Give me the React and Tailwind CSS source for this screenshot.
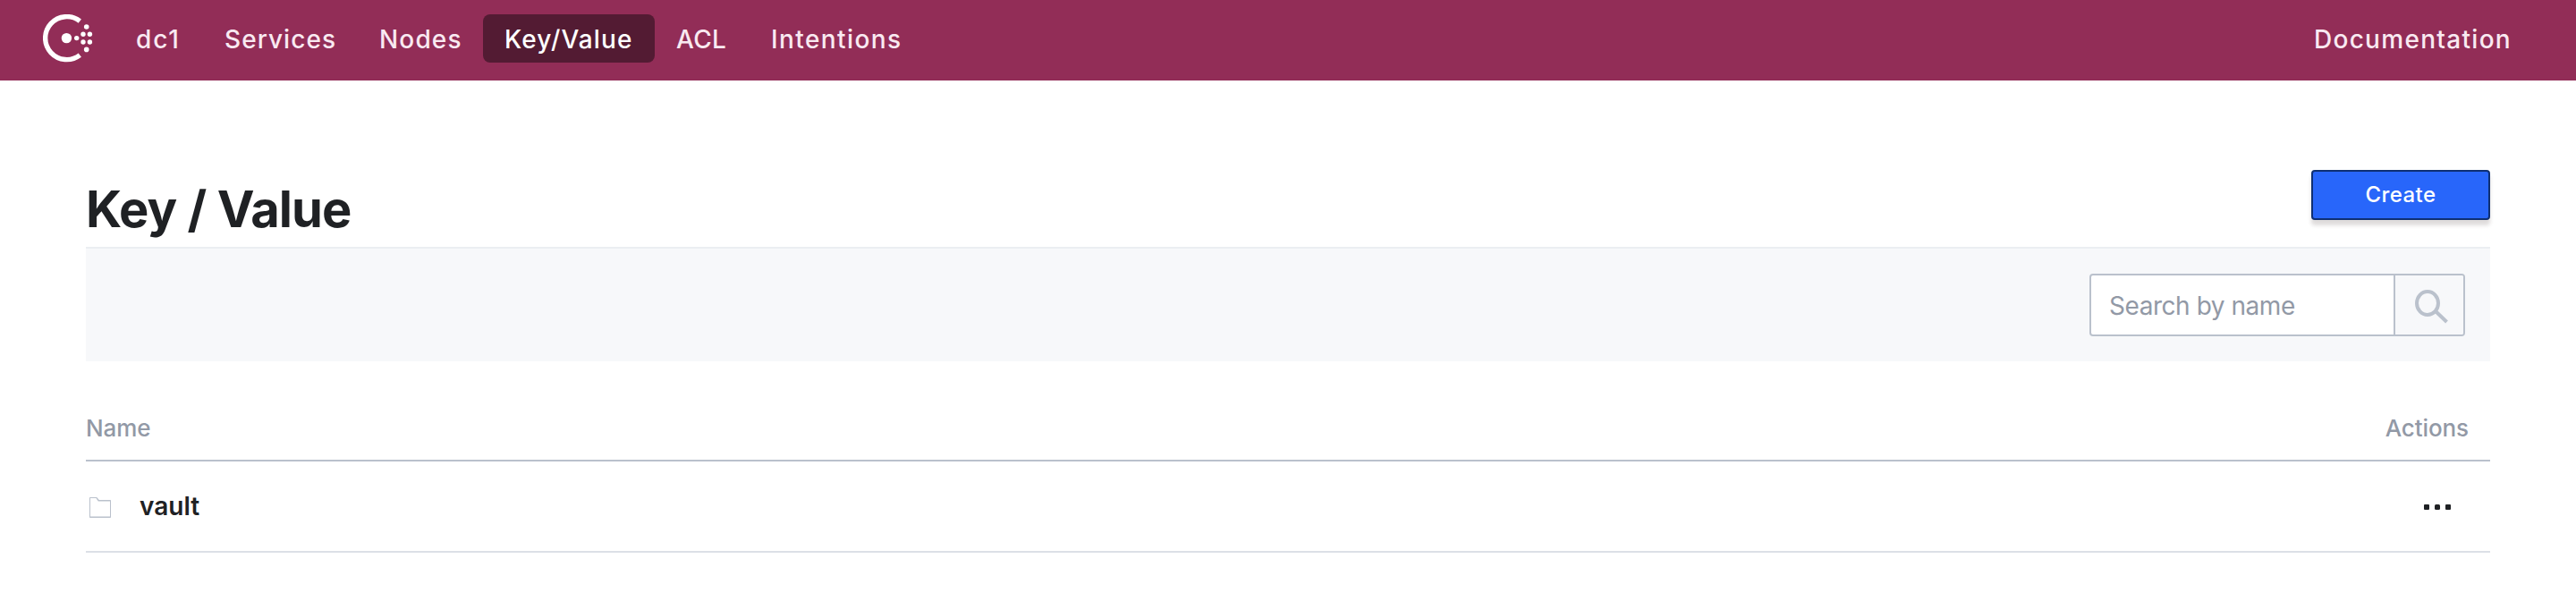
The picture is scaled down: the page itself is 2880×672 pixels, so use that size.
const navItem =
  "flex h-[54px] shrink-0 items-center rounded-lg px-6 pt-0.5 whitespace-nowrap";

const links = [
  { label: "dc1", look: "w-[99px] tracking-[1.9px] text-[#f9e9f1]" },
  { label: "Services", look: "w-[173px] tracking-[1.05px] text-[#f9e9f1]" },
  { label: "Nodes", look: "w-[140px] tracking-[1.15px] text-[#f9e9f1]" },
  { label: "Key/Value", look: "w-[192px] bg-[#531b33] tracking-[1.1px] text-white" },
  { label: "ACL", look: "w-[106px] tracking-[0.3px] text-[#f9e9f1]" },
  { label: "Intentions", look: "tracking-[1.4px] text-[#f9e9f1]" },
];

function ConsulLogo() {
  return (
    <svg width="56" height="54" viewBox="0 0 56 54" fill="#fff" aria-hidden="true">
      <path
        d="M41.3 7.6 A24 24 0 1 0 41.3 45.6"
        fill="none"
        stroke="#fff"
        strokeWidth="5.4"
      />
      <circle cx="26.4" cy="26.6" r="5.7" />
      <circle cx="37.7" cy="26.6" r="2.7" />
      <circle cx="45" cy="22.3" r="2.7" />
      <circle cx="52.4" cy="22.3" r="2.7" />
      <circle cx="45" cy="31" r="2.7" />
      <circle cx="52.4" cy="31" r="2.7" />
      <circle cx="48.7" cy="14" r="2.8" />
      <circle cx="48.7" cy="39.4" r="2.8" />
    </svg>
  );
}

function Header() {
  return (
    <header className="flex h-[90px] items-start bg-[#922d57] pt-4 text-[28px] leading-none font-medium">
      <div className="ml-12 w-20 shrink-0">
        <ConsulLogo />
      </div>
      <nav className="flex flex-1">
        {links.map((link) => (
          <a key={link.label} className={`${navItem} ${link.look}`}>
            {link.label}
          </a>
        ))}
      </nav>
      <a className={`${navItem} mr-12 tracking-[1.3px] text-[#f9e9f1]`}>Documentation</a>
    </header>
  );
}

function SearchBar() {
  return (
    <div className="flex h-[128px] items-start justify-end border-t-2 border-[#ebeef2] bg-[#f7f8fa] pt-7 pr-7">
      <div className="flex h-[70px] w-[420px] overflow-hidden rounded-[4px] border-2 border-[#bac1cc] bg-white">
        <input
          className="min-w-0 flex-1 pt-0.5 pl-5 text-[28px] tracking-[-0.45px] text-[#6f7682] outline-none placeholder:text-[#9299a6]"
          placeholder="Search by name"
        />
        <button className="flex w-[78px] shrink-0 border-l-2 border-[#bac1cc] bg-[#f7f8fa] pt-4 pl-[22px]">
          <svg width="38" height="38" viewBox="0 0 38 38" fill="none" stroke="#bac1cc" strokeWidth="4">
            <ellipse cx="14" cy="15" rx="12" ry="13" />
            <path d="M23 24 35.5 36" />
          </svg>
        </button>
      </div>
    </div>
  );
}

function KeyTable() {
  return (
    <div>
      <div className="flex h-[112px] items-center justify-between border-b-2 border-[#bac1cc] pt-[38px] pr-6 text-[26px] font-medium tracking-[-0.1px] text-[#9299a6]">
        <span>Name</span>
        <span>Actions</span>
      </div>
      <div className="flex h-[102px] items-center justify-between border-b-2 border-[#dce0e6] pr-11">
        <a className="flex items-center text-[28px] font-semibold text-[#1f2124]">
          <svg className="mt-[3px] mr-8 ml-1" width="24" height="24" viewBox="0 0 24 24" fill="#bac1cc" fillRule="evenodd">
            <path d="M0 .7Q0 0 .7 0H8.2L10.8 3H23.3Q24 3 24 3.7V22.3Q24 23 23.3 23H.7Q0 23 0 22.3ZM1 1V21.4H23V4.6H9.8L7.4 1Z" />
          </svg>
          vault
        </a>
        <svg className="mt-0.5" width="30" height="6" viewBox="0 0 30 6" fill="#1f2124">
          <rect width="6" height="6" rx="1" />
          <rect x="12" width="6" height="6" rx="1.5" />
          <rect x="24" width="6" height="6" rx="1" />
        </svg>
      </div>
    </div>
  );
}

export default function App() {
  return (
    <div className="min-h-[672px] bg-white font-['Inter',sans-serif]">
      <Header />
      <main className="px-24">
        <div className="flex h-[186px] justify-between">
          <h1 className="pt-[108px] text-[56px] leading-[72px] font-bold tracking-[-0.95px] text-[#1f2124]">
            Key / Value
          </h1>
          <button className="mt-[100px] h-14 w-[200px] rounded-[4px] border-2 border-[#0e2f73] bg-[#2866fa] text-[24px] leading-none font-medium tracking-[0.4px] text-white shadow-[0_6px_4px_rgba(40,20,20,0.15)]">
            Create
          </button>
        </div>
        <SearchBar />
        <KeyTable />
      </main>
    </div>
  );
}
